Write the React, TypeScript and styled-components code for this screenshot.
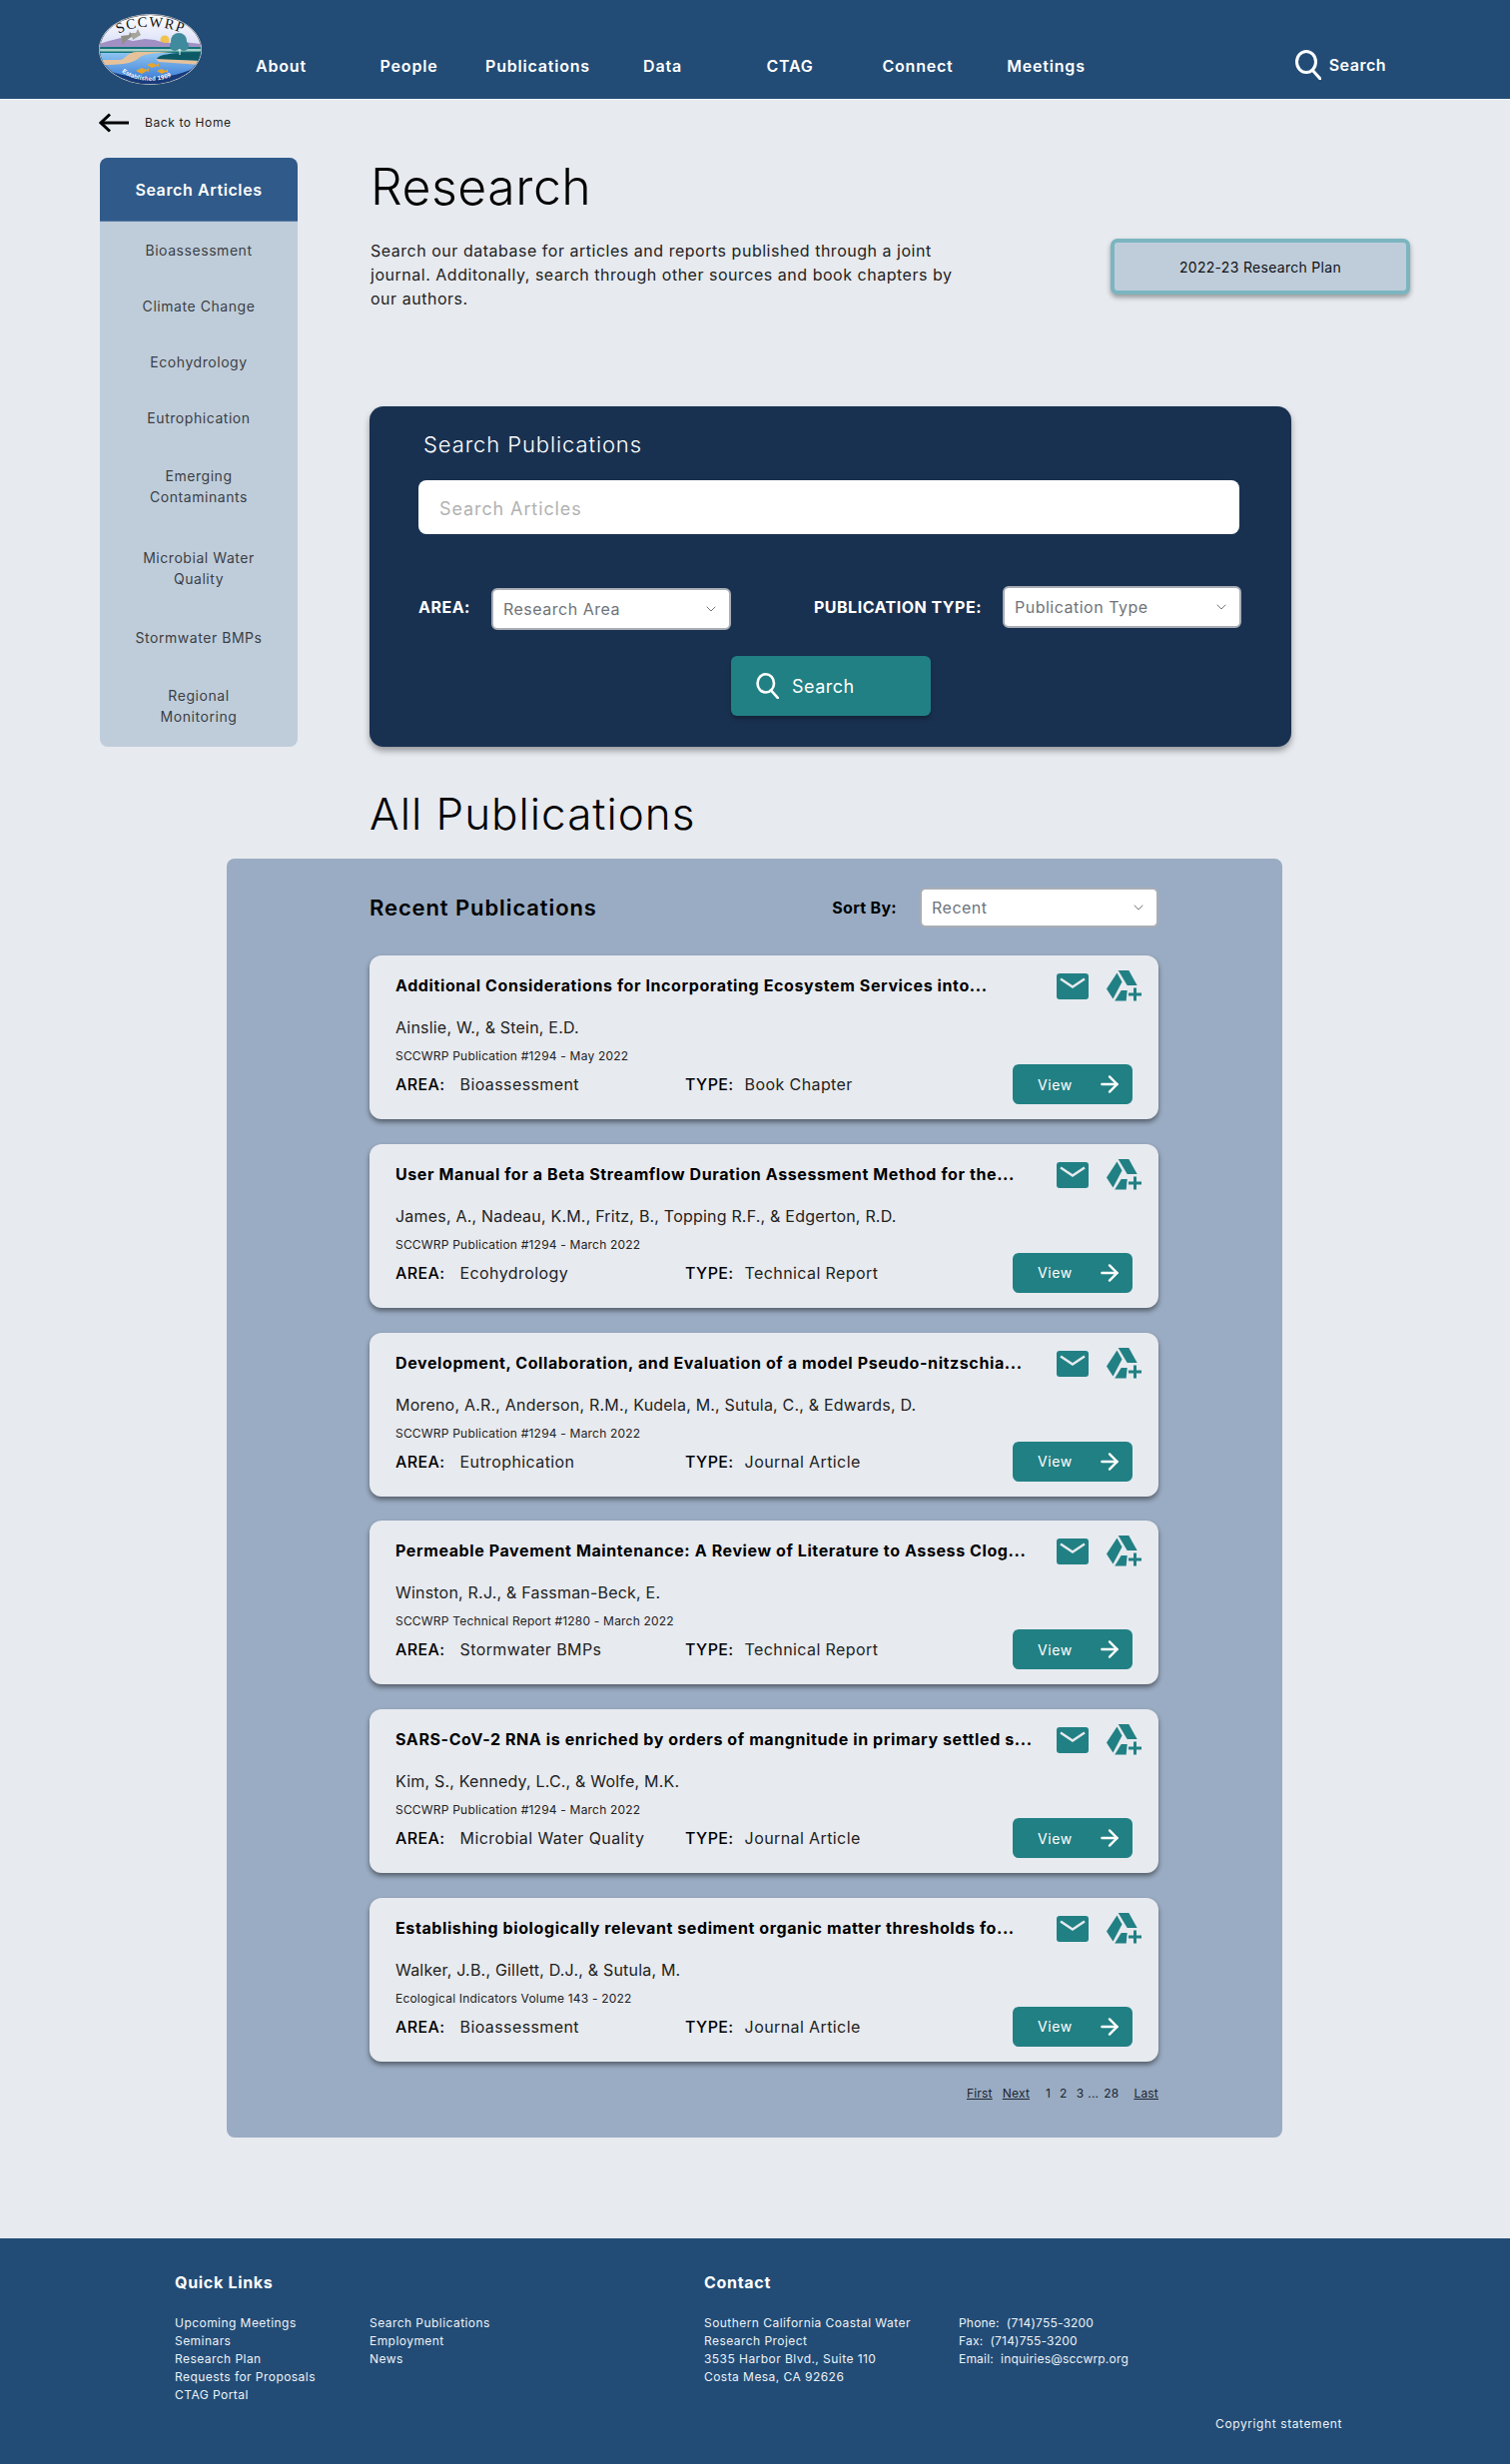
import React from "react";
import styled, { createGlobalStyle } from "styled-components";
import { ArrowRight, ChevronDown } from "lucide-react";

const GlobalStyle = createGlobalStyle`
  html, body {
    margin: 0;
    padding: 0;
    background: #e7eaef;
    font-family: Inter, "Noto Sans", "Liberation Sans", sans-serif;
    color: #000;
  }
  * { box-sizing: border-box; }
`;

const Page = styled.div`
  width: 1512px;
  height: 2468px;
  overflow: hidden;
  background: #e7eaef;
`;

const Header = styled.header`
  display: flex;
  height: 100px;
  padding-left: 99px;
  background: #224c76;
  color: #fff;
  border-bottom: 1px solid #f2f5f8;
`;

const LogoWrap = styled.a`
  display: block;
  width: 103px;
  height: 71px;
  margin-top: 14px;
  margin-right: 16px;
`;

const Nav = styled.nav`
  display: flex;
  padding-top: 56px;
`;

const NavItem = styled.a<{ $w: number }>`
  width: ${(p) => p.$w}px;
  text-align: center;
  font-size: 16px;
  font-weight: 600;
  line-height: 20px;
  letter-spacing: 0.8px;
  white-space: nowrap;
`;

const HeaderSearch = styled.div`
  display: flex;
  align-items: center;
  gap: 8px;
  height: 30px;
  margin-left: auto;
  margin-top: 50px;
  margin-right: 124px;
  font-size: 16px;
  font-weight: 600;
  letter-spacing: 0.5px;
`;

const BackRow = styled.div`
  display: flex;
  align-items: center;
  gap: 16px;
  height: 58px;
  padding: 0 0 13px 99px;
  font-size: 12px;
  letter-spacing: 0.6px;
  color: #1d1d1d;
`;

const Main = styled.div`
  display: flex;
  gap: 72px;
  padding-left: 100px;
`;

const Sidebar = styled.aside`
  width: 198px;
  height: 590px;
  border-radius: 8px;
  overflow: hidden;
  background: #bfcddb;
`;

const SideActive = styled.div`
  display: flex;
  align-items: center;
  justify-content: center;
  height: 64px;
  background: #305a89;
  color: #fff;
  font-size: 16px;
  font-weight: 600;
  letter-spacing: 0.6px;
  border-bottom: 1px solid #5a7ba3;
`;

const SideItem = styled.div<{ $tall?: boolean }>`
  display: flex;
  align-items: center;
  justify-content: center;
  height: ${(p) => (p.$tall ? 82 : 56)}px;
  text-align: center;
  font-size: 14px;
  line-height: 21px;
  letter-spacing: 0.55px;
  color: #3b3f45;
`;

const Content = styled.div`
  width: 1042px;
`;

const Title = styled.h1`
  margin: 0 0 0 1px;
  font-size: 50px;
  line-height: 58px;
  font-weight: 300;
  letter-spacing: 0.5px;
`;

const IntroRow = styled.div`
  display: flex;
  align-items: flex-start;
  justify-content: space-between;
  margin-top: 23px;
`;

const Intro = styled.p`
  width: 596px;
  margin: 0 0 0 1px;
  font-size: 16px;
  line-height: 24px;
  letter-spacing: 0.52px;
  color: #222;
`;

const PlanButton = styled.button`
  width: 300px;
  height: 56px;
  border: 4px solid #7bb5c0;
  border-radius: 7px;
  background: #bfcddb;
  box-shadow: 0 3px 5px rgba(0, 0, 0, 0.35);
  font-family: inherit;
  font-size: 14px;
  letter-spacing: 0.3px;
  color: #111;
  padding: 1px 0 0;
`;

const SearchPanel = styled.section`
  display: flex;
  flex-direction: column;
  width: 923px;
  height: 341px;
  margin-top: 96px;
  padding: 23px 52px 0 49px;
  border-radius: 14px;
  background: #193150;
  color: #fff;
  box-shadow: 0 4px 6px rgba(0, 0, 0, 0.35);
`;

const PanelTitle = styled.h2`
  margin: 0 0 0 5px;
  font-size: 22px;
  line-height: 30px;
  font-weight: 300;
  letter-spacing: 0.9px;
`;

const ArticleInput = styled.input`
  width: 822px;
  height: 54px;
  margin-top: 21px;
  padding: 2px 21px 0;
  border: 0;
  border-radius: 8px;
  background: #fff;
  font-family: inherit;
  font-size: 18px;
  letter-spacing: 0.9px;
  &::placeholder {
    color: #b2b2b2;
    opacity: 1;
  }
`;

const FilterRow = styled.div`
  display: flex;
  justify-content: space-between;
  width: 824px;
  height: 44px;
  margin-top: 52px;
`;

const FilterGroup = styled.div`
  display: flex;
  align-items: flex-start;
  gap: 21px;
`;

const FilterLabel = styled.span`
  font-size: 16px;
  font-weight: 700;
  line-height: 42px;
  letter-spacing: 0.5px;
  color: #fff;
`;

const Select = styled.div<{ $w: number; $top?: number }>`
  display: flex;
  align-items: center;
  justify-content: space-between;
  width: ${(p) => p.$w}px;
  height: ${(p) => (p.$top === undefined ? 40 : 42)}px;
  margin-top: ${(p) => p.$top ?? 0}px;
  padding: 0 10px;
  border: 2px solid #a9aeb5;
  border-radius: 6px;
  background: #fff;
  font-size: 16px;
  letter-spacing: 0.5px;
  color: #6f747a;
`;

const SearchButton = styled.button`
  display: flex;
  align-items: center;
  gap: 13px;
  width: 200px;
  height: 60px;
  margin: 26px 0 0 313px;
  padding: 0 0 0 25px;
  border: 0;
  border-radius: 6px;
  background: #218084;
  color: #fff;
  box-shadow: 0 3px 4px rgba(0, 0, 0, 0.3);
  font-family: inherit;
  font-size: 18px;
  letter-spacing: 0.5px;
`;

const AllTitle = styled.h2`
  margin: 40px 0 0 370px;
  font-size: 44px;
  line-height: 54px;
  font-weight: 300;
  letter-spacing: 1px;
`;

const PubPanel = styled.section`
  width: 1057px;
  height: 1281px;
  margin: 18px 0 0 227px;
  padding: 29px 0 0 143px;
  border-radius: 8px;
  background: #9aacc3;
`;

const PubHead = styled.div`
  display: flex;
  align-items: center;
  width: 790px;
  height: 40px;
`;

const PubHeading = styled.h3`
  margin: 0;
  font-size: 22px;
  font-weight: 600;
  letter-spacing: 0.9px;
`;

const SortLabel = styled.span`
  margin-left: auto;
  margin-right: 23px;
  font-size: 16px;
  font-weight: 700;
  letter-spacing: 0.3px;
`;

const CardList = styled.div`
  display: flex;
  flex-direction: column;
  gap: 24.8px;
  width: 790px;
  margin-top: 28px;
`;

const Card = styled.article`
  height: 164px;
  padding: 15px 26px;
  border-radius: 12px;
  background: #e7eaef;
  box-shadow: 0 3px 5px rgba(0, 0, 0, 0.45);
`;

const CardTop = styled.div`
  display: flex;
  align-items: flex-start;
  height: 30px;
  margin-right: -10px;
`;

const CardTitle = styled.h4`
  margin: 0;
  font-size: 16px;
  font-weight: 700;
  line-height: 30px;
  white-space: nowrap;
  letter-spacing: 0.6px;
`;

const CardIcons = styled.div`
  display: flex;
  align-items: flex-start;
  gap: 18px;
  margin-left: auto;
`;

const Authors = styled.p`
  margin: 15px 0 0;
  font-size: 16px;
  line-height: 24px;
  letter-spacing: 0.2px;
  color: #222;
`;

const Meta = styled.p`
  margin: 9px 0 0;
  font-size: 12px;
  line-height: 16px;
  letter-spacing: 0.2px;
  color: #222;
`;

const CardBottom = styled.div`
  display: grid;
  grid-template-columns: 290px 1fr 120px;
  align-items: center;
  height: 40px;
`;

const Field = styled.div<{ $gap: number }>`
  display: flex;
  gap: ${(p) => p.$gap}px;
  font-size: 16px;
  letter-spacing: 0.4px;
  color: #222;
`;

const FieldName = styled.span`
  font-weight: 500;
  color: #000;
`;

const ViewButton = styled.button`
  display: flex;
  align-items: center;
  justify-content: space-between;
  width: 120px;
  height: 40px;
  padding: 0 10px 0 25px;
  border: 0;
  border-radius: 6px;
  background: #218084;
  color: #fff;
  font-family: inherit;
  font-size: 14px;
  letter-spacing: 0.6px;
`;

const Pager = styled.div`
  display: flex;
  justify-content: flex-end;
  width: 790px;
  margin-top: 24px;
  font-size: 12px;
  line-height: 16px;
  letter-spacing: 0.2px;
  color: #1b2430;
`;

const PagerLink = styled.a<{ $gap: number }>`
  margin-left: ${(p) => p.$gap}px;
  text-decoration: underline;
`;

const PagerNum = styled.span<{ $gap: number }>`
  margin-left: ${(p) => p.$gap}px;
`;

const Footer = styled.footer`
  height: 226px;
  margin-top: 101px;
  padding: 34px 168px 0 175px;
  background: #224c76;
  color: #eef2f6;
`;

const FooterColumns = styled.div`
  display: flex;
`;

const FooterBlock = styled.div<{ $w: number }>`
  width: ${(p) => p.$w}px;
`;

const FooterHeading = styled.h5`
  margin: 0 0 22px;
  font-size: 16px;
  font-weight: 700;
  line-height: 20px;
  letter-spacing: 0.7px;
  color: #fff;
`;

const FooterLists = styled.div<{ $first: number }>`
  display: grid;
  grid-template-columns: ${(p) => p.$first}px 1fr;
`;

const FooterList = styled.div<{ $tight?: boolean }>`
  font-size: 12px;
  line-height: 18px;
  letter-spacing: ${(p) => (p.$tight ? 0.2 : 0.45)}px;
`;

const Copyright = styled.div`
  margin-top: 11px;
  text-align: right;
  font-size: 12px;
  line-height: 18px;
  letter-spacing: 0.6px;
`;

const Logo = () => (
  <svg width="103" height="71" viewBox="0 0 103 71">
    <defs>
      <clipPath id="oval">
        <ellipse cx="51.5" cy="35.5" rx="50.5" ry="34.5" />
      </clipPath>
      <linearGradient id="sky" x1="0" y1="0" x2="0" y2="1">
        <stop offset="0" stopColor="#ffffff" />
        <stop offset="1" stopColor="#d6dcf6" />
      </linearGradient>
      <linearGradient id="water" x1="0" y1="0" x2="0" y2="1">
        <stop offset="0" stopColor="#8cc4f0" />
        <stop offset="1" stopColor="#2f6fd2" />
      </linearGradient>
      <path id="topArc" d="M20 20 C 34 10, 70 10, 92 23" />
      <path id="bottomArc" d="M23 58 C 38 70, 66 70, 84 56" />
    </defs>
    <ellipse cx="51.5" cy="35.5" rx="51.5" ry="35.5" fill="#e0e0e0" />
    <ellipse cx="51.5" cy="35.5" rx="50.8" ry="34.8" fill="#1c1c24" />
    <g clipPath="url(#oval)">
      <rect width="103" height="34" fill="url(#sky)" />
      <circle cx="66" cy="26" r="4.5" fill="#efc34e" />
      <path d="M0 30 L10 27 L22 24 L34 27 L46 25 L56 26 L66 29 L84 28 L103 30 V36 H0 Z" fill="#a190c4" />
      <rect y="33" width="103" height="14" fill="#127379" />
      <rect y="35" width="103" height="2.5" fill="#a9cfc9" />
      <rect y="39" width="103" height="32" fill="url(#water)" />
      <path d="M0 46 H20 C27 46 28 38 38 38 H76 C60 39 46 39 40 44 C34 50 22 51 0 51 Z" fill="#e6c29b" />
      <path d="M58 45 C60 41 68 39 103 38 V47 L60 46 Z" fill="#0d5a66" />
      <path d="M57 45 L103 47 V51 L60 48 Z" fill="#e6c29b" />
      <path d="M0 71 V52 C25 68 75 68 103 50 V71 Z" fill="#173a7a" />
      <ellipse cx="80" cy="27" rx="8" ry="8" fill="#3f8a9c" />
      <ellipse cx="76" cy="32" rx="5" ry="5" fill="#3f8a9c" />
      <ellipse cx="85" cy="32" rx="5" ry="5" fill="#3f8a9c" />
      <rect x="80.5" y="35" width="1" height="6" fill="#fff" />
      <path d="M22 22 L30 21 L31 18 L34 22 L27 27 L24 31 Z" fill="#8f8f88" />
      <path d="M32 19 L37 19 L39 15 L42 21 L37 24 L34 26 Z" fill="#a5a59c" />
      <path d="M37 57 l6 -3 l5 2 l2 -2 v4 l-2 -1 l-5 3 z M48 51 l5 -2 l5 2 l2 -2 v4 l-2 -1 l-5 2 z M58 57 l5 -2 l4 2 l2 -2 v4 l-2 -1 l-4 2 z" fill="#e8a52c" />
    </g>
    <text fontFamily="'Liberation Serif', serif" fontSize="14.5" fill="#161616" letterSpacing="1.3">
      <textPath href="#topArc">SCCWRP</textPath>
    </text>
    <text fontFamily="'Liberation Sans', sans-serif" fontSize="6" fontWeight="700" fill="#fff" letterSpacing="0.2">
      <textPath href="#bottomArc">Established 1969</textPath>
    </text>
  </svg>
);

const BackArrow = () => (
  <svg width="30" height="20" viewBox="0 0 30 20" fill="none" stroke="#000" strokeWidth="3">
    <path d="M30 10 H3" />
    <path d="M11 1.5 L2 10 L11 18.5" />
  </svg>
);

const SearchGlyph = ({ w, h }: { w: number; h: number }) => (
  <svg width={w} height={h} viewBox="0 0 26 30" fill="none" stroke="#fff" strokeWidth="3">
    <ellipse cx="11" cy="12" rx="9.5" ry="10.5" />
    <path d="M17 20 L25 29" strokeLinecap="round" />
  </svg>
);

const MailIcon = () => (
  <svg width="32" height="26" viewBox="0 0 32 26" style={{ marginTop: 3 }}>
    <rect width="32" height="26" rx="3" fill="#218084" />
    <path d="M4 5.5 L16 13.5 L28 5.5" fill="none" stroke="#e7eaef" strokeWidth="2.4" />
  </svg>
);

const DriveAddIcon = () => (
  <svg width="36" height="31" viewBox="0 0 36 31" fill="#218084">
    <path d="M11.7 0 H22.3 L30.7 15 H20.7 Z" />
    <path d="M10.5 2.5 L15.5 11.5 L6.5 28.5 L0 18.5 Z" />
    <path d="M8.2 30.5 L14.7 20 H20.7 L19.7 30.5 Z" />
    <path d="M27 17.5 H30 V22.5 H35 V25.5 H30 V30.5 H27 V25.5 H22 V22.5 H27 Z" />
  </svg>
);

const Chevron = () => <ChevronDown size={16} strokeWidth={1.2} color="#555" />;

const publications = [
  {
    title: "Additional Considerations for Incorporating Ecosystem Services into...",
    authors: "Ainslie, W., & Stein, E.D.",
    meta: "SCCWRP Publication #1294 - May 2022",
    area: "Bioassessment",
    type: "Book Chapter",
  },
  {
    title: "User Manual for a Beta Streamflow Duration Assessment Method for the...",
    authors: "James, A., Nadeau, K.M., Fritz, B., Topping R.F., & Edgerton, R.D.",
    meta: "SCCWRP Publication #1294 - March 2022",
    area: "Ecohydrology",
    type: "Technical Report",
  },
  {
    title: "Development, Collaboration, and Evaluation of a model Pseudo-nitzschia...",
    authors: "Moreno, A.R., Anderson, R.M., Kudela, M., Sutula, C., & Edwards, D.",
    meta: "SCCWRP Publication #1294 - March 2022",
    area: "Eutrophication",
    type: "Journal Article",
  },
  {
    title: "Permeable Pavement Maintenance: A Review of Literature to Assess Clog...",
    authors: "Winston, R.J., & Fassman-Beck, E.",
    meta: "SCCWRP Technical Report #1280 - March 2022",
    area: "Stormwater BMPs",
    type: "Technical Report",
  },
  {
    title: "SARS-CoV-2 RNA is enriched by orders of mangnitude in primary settled s...",
    authors: "Kim, S., Kennedy, L.C., & Wolfe, M.K.",
    meta: "SCCWRP Publication #1294 - March 2022",
    area: "Microbial Water Quality",
    type: "Journal Article",
  },
  {
    title: "Establishing biologically relevant sediment organic matter thresholds fo...",
    authors: "Walker, J.B., Gillett, D.J., & Sutula, M.",
    meta: "Ecological Indicators Volume 143 - 2022",
    area: "Bioassessment",
    type: "Journal Article",
  },
];

const navItems: [string, number][] = [
  ["About", 127],
  ["People", 129],
  ["Publications", 129],
  ["Data", 121],
  ["CTAG", 134],
  ["Connect", 122],
  ["Meetings", 135],
];

const App: React.FC = () => (
  <Page>
    <GlobalStyle />
    <Header>
      <LogoWrap>
        <Logo />
      </LogoWrap>
      <Nav>
        {navItems.map(([label, w]) => (
          <NavItem key={label} $w={w}>
            {label}
          </NavItem>
        ))}
      </Nav>
      <HeaderSearch>
        <SearchGlyph w={26} h={30} />
        Search
      </HeaderSearch>
    </Header>
    <BackRow>
      <BackArrow />
      Back to Home
    </BackRow>
    <Main>
      <Sidebar>
        <SideActive>Search Articles</SideActive>
        <SideItem>Bioassessment</SideItem>
        <SideItem>Climate Change</SideItem>
        <SideItem>Ecohydrology</SideItem>
        <SideItem>Eutrophication</SideItem>
        <SideItem $tall>
          Emerging
          <br />
          Contaminants
        </SideItem>
        <SideItem $tall>
          Microbial Water
          <br />
          Quality
        </SideItem>
        <SideItem>Stormwater BMPs</SideItem>
        <SideItem $tall>
          Regional
          <br />
          Monitoring
        </SideItem>
      </Sidebar>
      <Content>
        <Title>Research</Title>
        <IntroRow>
          <Intro>
            Search our database for articles and reports published through a joint journal.
            Additonally, search through other sources and book chapters by our authors.
          </Intro>
          <PlanButton>2022-23 Research Plan</PlanButton>
        </IntroRow>
        <SearchPanel>
          <PanelTitle>Search Publications</PanelTitle>
          <ArticleInput placeholder="Search Articles" readOnly />
          <FilterRow>
            <FilterGroup>
              <FilterLabel>AREA:</FilterLabel>
              <Select $w={240} $top={2}>
                Research Area
                <Chevron />
              </Select>
            </FilterGroup>
            <FilterGroup>
              <FilterLabel>PUBLICATION TYPE:</FilterLabel>
              <Select $w={239} $top={0}>
                Publication Type
                <Chevron />
              </Select>
            </FilterGroup>
          </FilterRow>
          <SearchButton>
            <SearchGlyph w={23} h={26} />
            Search
          </SearchButton>
        </SearchPanel>
      </Content>
    </Main>
    <AllTitle>All Publications</AllTitle>
    <PubPanel>
      <PubHead>
        <PubHeading>Recent Publications</PubHeading>
        <SortLabel>Sort By:</SortLabel>
        <Select $w={239}>
          Recent
          <Chevron />
        </Select>
      </PubHead>
      <CardList>
        {publications.map((pub) => (
          <Card key={pub.title}>
            <CardTop>
              <CardTitle>{pub.title}</CardTitle>
              <CardIcons>
                <MailIcon />
                <DriveAddIcon />
              </CardIcons>
            </CardTop>
            <Authors>{pub.authors}</Authors>
            <Meta>{pub.meta}</Meta>
            <CardBottom>
              <Field $gap={15}>
                <FieldName>AREA:</FieldName>
                {pub.area}
              </Field>
              <Field $gap={11}>
                <FieldName>TYPE:</FieldName>
                {pub.type}
              </Field>
              <ViewButton>
                View
                <ArrowRight size={26} strokeWidth={2.2} />
              </ViewButton>
            </CardBottom>
          </Card>
        ))}
      </CardList>
      <Pager>
        <PagerLink $gap={0}>First</PagerLink>
        <PagerLink $gap={10}>Next</PagerLink>
        <PagerNum $gap={16}>1</PagerNum>
        <PagerNum $gap={9}>2</PagerNum>
        <PagerNum $gap={9}>3</PagerNum>
        <PagerNum $gap={4}>...</PagerNum>
        <PagerNum $gap={5}>28</PagerNum>
        <PagerLink $gap={15}>Last</PagerLink>
      </Pager>
    </PubPanel>
    <Footer>
      <FooterColumns>
        <FooterBlock $w={530}>
          <FooterHeading>Quick Links</FooterHeading>
          <FooterLists $first={195}>
            <FooterList>
              <div>Upcoming Meetings</div>
              <div>Seminars</div>
              <div>Research Plan</div>
              <div>Requests for Proposals</div>
              <div>CTAG Portal</div>
            </FooterList>
            <FooterList>
              <div>Search Publications</div>
              <div>Employment</div>
              <div>News</div>
            </FooterList>
          </FooterLists>
        </FooterBlock>
        <FooterBlock $w={600}>
          <FooterHeading>Contact</FooterHeading>
          <FooterLists $first={255}>
            <FooterList>
              <div>Southern California Coastal Water</div>
              <div>Research Project</div>
              <div>3535 Harbor Blvd., Suite 110</div>
              <div>Costa Mesa, CA 92626</div>
            </FooterList>
            <FooterList $tight>
              <div>Phone:&nbsp; (714)755-3200</div>
              <div>Fax:&nbsp; (714)755-3200</div>
              <div>Email:&nbsp; inquiries@sccwrp.org</div>
            </FooterList>
          </FooterLists>
        </FooterBlock>
      </FooterColumns>
      <Copyright>Copyright statement</Copyright>
    </Footer>
  </Page>
);

export default App;
